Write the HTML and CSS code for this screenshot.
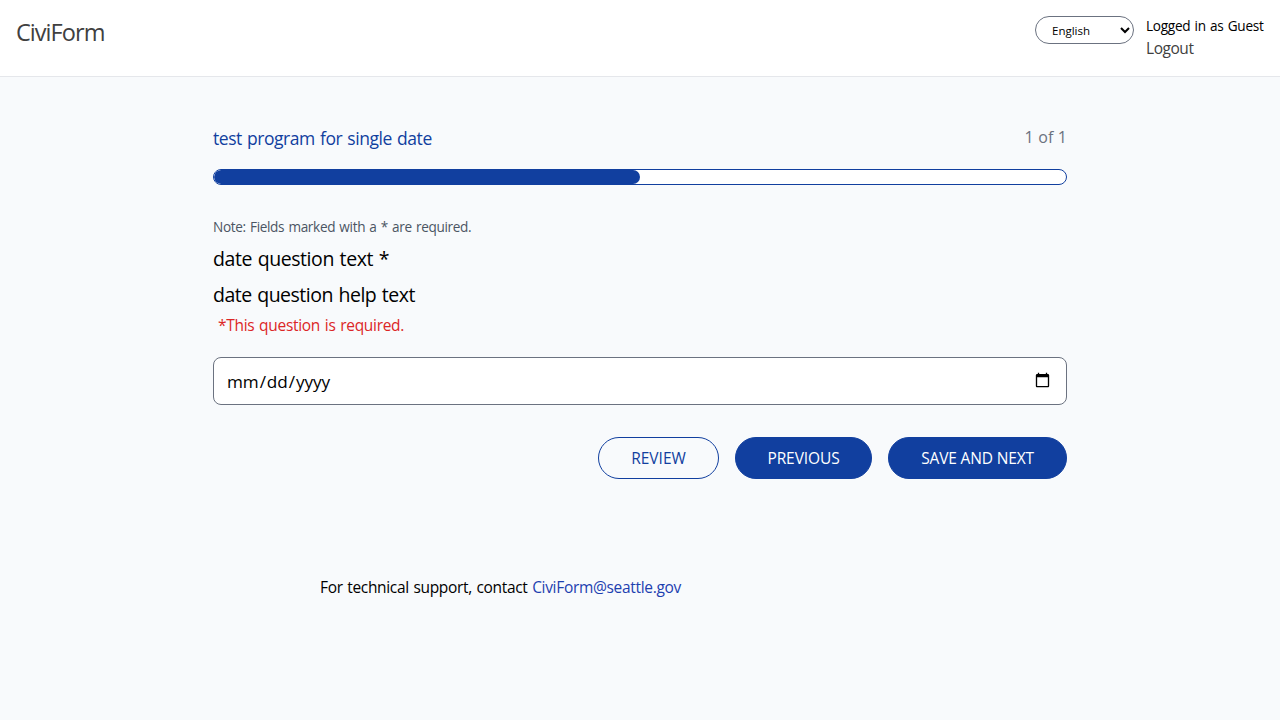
FILE: index.html
```html
<!DOCTYPE html>
<html lang="en">
<head>
<meta charset="utf-8">
<title>CiviForm</title>
<link rel="stylesheet" href="styles.css">
</head>
<body>
<header class="topbar">
  <a class="brand">CiviForm</a>
  <div class="account">
    <select class="language" aria-label="Language"><option>English</option></select>
    <div class="session">
      <div class="user">Logged in as Guest</div>
      <a class="logout">Logout</a>
    </div>
  </div>
</header>
<main class="content">
  <div class="program">
    <h2 class="program-title">test program for single date</h2>
    <div class="page-count">1 of 1</div>
  </div>
  <div class="progress"><div class="progress-fill"></div></div>
  <form class="question">
    <div class="note">Note: Fields marked with a * are required.</div>
    <div class="question-text">date question text *</div>
    <div class="question-text help">date question help text</div>
    <div class="error">*This question is required.</div>
    <input class="date" type="date" aria-label="date question text">
    <div class="actions">
      <button type="button" class="button review">Review</button>
      <button type="button" class="button previous">Previous</button>
      <button type="button" class="button save">Save and next</button>
    </div>
  </form>
</main>
<footer class="footer">For technical support, contact <a class="mail">CiviForm@seattle.gov</a></footer>
</body>
</html>
```
FILE: styles.css
```css
* {
  box-sizing: border-box;
}

body {
  margin: 0;
  min-height: 100vh;
  background: #f8fafc;
  color: #000;
  font-family: "Open Sans", "Liberation Sans", sans-serif;
  font-size: 15.5px;
  line-height: 22px;
  word-spacing: 1px;
}

.topbar {
  display: flex;
  justify-content: space-between;
  align-items: flex-start;
  height: 77px;
  padding: 16px;
  background: #fff;
  border-bottom: 1px solid #e5e7eb;
}

.brand {
  color: #404040;
  font-size: 23.5px;
  line-height: 32px;
  letter-spacing: -0.95px;
}

.account {
  display: flex;
  gap: 12px;
}

.language {
  width: 99px;
  height: 28px;
  padding: 0 0 0 12px;
  border: 1px solid #6b7280;
  border-radius: 14px;
  background: #fff;
  color: #000;
  font-family: inherit;
  font-size: 11.5px;
}

.session {
  width: 118px;
  padding-top: 1px;
}

.user {
  padding-bottom: 2px;
  font-size: 13.6px;
  line-height: 18px;
  letter-spacing: -0.28px;
  white-space: nowrap;
}

.logout {
  display: block;
  color: #404040;
  letter-spacing: -0.45px;
}

.content {
  width: 854px;
  margin: 48px auto 0;
}

.program {
  display: flex;
  justify-content: space-between;
  height: 44px;
}

.program-title {
  margin: 0;
  color: #113f9f;
  font-size: 17.5px;
  font-weight: 400;
  line-height: 27px;
  letter-spacing: -0.44px;
}

.page-count {
  padding-top: 1px;
  color: #6b7280;
  font-size: 16px;
  word-spacing: 0.4px;
}

.progress {
  height: 16px;
  border: 1px solid #113f9f;
  border-radius: 8px;
  background: #fff;
  overflow: hidden;
}

.progress-fill {
  width: 50%;
  height: 100%;
  border-radius: 7px;
  background: #113f9f;
}

.question {
  display: flex;
  flex-direction: column;
  margin-top: 32px;
}

.note {
  padding: 1px 0;
  color: #4b5563;
  font-size: 13.6px;
  line-height: 18px;
  letter-spacing: -0.34px;
}

.question-text {
  margin-top: 8px;
  padding: 1px 0;
  font-size: 19.5px;
  line-height: 26px;
  letter-spacing: -0.42px;
}

.help {
  letter-spacing: -0.5px;
}

.error {
  margin: 5px 0 21px;
  padding-left: 5px;
  color: #dc2626;
  letter-spacing: -0.3px;
}

.date {
  height: 48px;
  padding: 0 13px 0 12px;
  border: 1px solid #6b7280;
  border-radius: 8px;
  background: #fff;
  color: #000;
  font-family: inherit;
  font-size: 17.2px;
  letter-spacing: -0.1px;
}

.actions {
  display: flex;
  justify-content: flex-end;
  gap: 16px;
  margin-top: 32px;
}

.button {
  height: 42px;
  padding: 0;
  border: 1px solid #113f9f;
  border-radius: 21px;
  background: #113f9f;
  color: #fff;
  font-family: inherit;
  font-size: 15.5px;
  text-transform: uppercase;
}

.review {
  width: 121px;
  background: transparent;
  color: #113f9f;
}

.previous {
  width: 137px;
  letter-spacing: -0.1px;
}

.save {
  width: 179px;
  letter-spacing: -0.15px;
}

.footer {
  margin: 97px 0 0 320px;
  letter-spacing: -0.34px;
}

.mail {
  color: #1d40b0;
  letter-spacing: -0.32px;
}
```
